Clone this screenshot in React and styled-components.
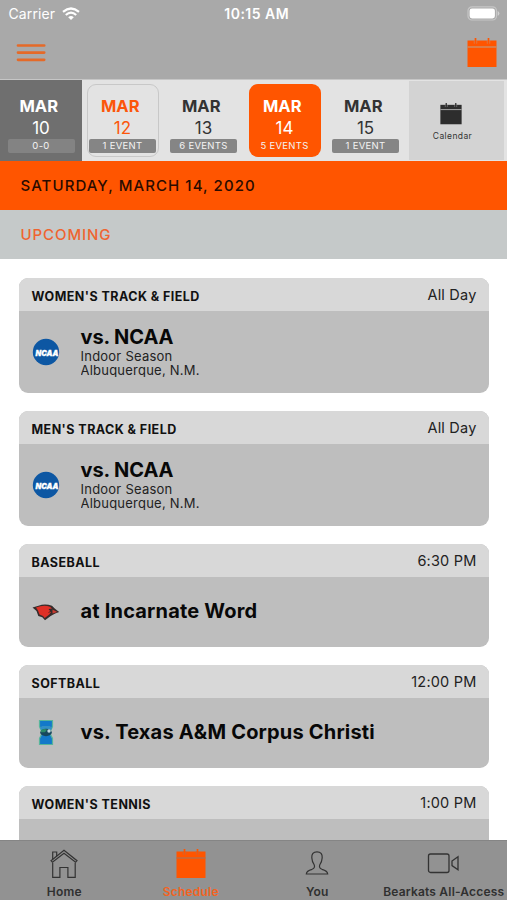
import React from "react";
import styled, { createGlobalStyle } from "styled-components";

const days = [
  { month: "MAR", day: "10", label: "0-0", type: "past" },
  { month: "MAR", day: "12", label: "1 EVENT", type: "today" },
  { month: "MAR", day: "13", label: "6 EVENTS", type: "normal" },
  { month: "MAR", day: "14", label: "5 EVENTS", type: "selected" },
  { month: "MAR", day: "15", label: "1 EVENT", type: "normal" },
];

const NcaaLogo = () => (
  <svg width="28" height="28" viewBox="0 0 28 28">
    <circle cx="14" cy="14" r="13.200" fill="#0d57a3" />
    <text
      x="3.500"
      y="17.500"
      textLength="23"
      lengthAdjust="spacingAndGlyphs"
      fill="#fff"
      stroke="#fff"
      strokeWidth="0.300"
      fontFamily="Inter, sans-serif"
      fontSize="8"
      fontWeight="900"
      fontStyle="italic"
    >
      NCAA
    </text>
  </svg>
);

const CardinalLogo = () => (
  <svg width="28" height="28" viewBox="0 0 28 28">
    <path
      d="M.5 9.500l6-1.800Q13 5.200 20 7.800l3 3 4.200 3.200-4 1.400-4.500 2.600-5.700 4.300-2.700-3-4-1.300-1.800-5z"
      fill="#362c2b"
    />
    <path
      d="M4 9.600q7.500-3 14-.8l2 1.700-3.500.5 2.500 3-1.700 2.600-4.600 3.400-1.700-2-3.500-1.500-1.500-4z"
      fill="#df3026"
    />
    <path d="M20.500 11.500l4.800 2.400-4.800 1.600z" fill="#c93a30" />
    <path d="M17.500 11.200l1.500 2-2.500 1.300" fill="none" stroke="#322625" strokeWidth=".8" />
  </svg>
);

const IslandersLogo = () => (
  <svg width="28" height="28" viewBox="0 0 28 28">
    <path
      d="M7.500 1.500h13v6l-2 4.500v3.500l2 4v6h-13v-6l2-4V12l-2-4.500z"
      fill="#1379c9"
      stroke="#58b59b"
      strokeWidth="1.200"
    />
    <path d="M8 9.500L10 7h8l2 2.500-2 2h-8z" fill="#3290c4" />
    <ellipse cx="14" cy="13.500" rx="5.800" ry="3.700" fill="#17485d" />
    <path d="M9 11.500q3-2.500 6-.8l-2 2.600H9z" fill="#2c8b68" />
    <circle cx="17" cy="12" r="1.700" fill="#c3dce1" />
  </svg>
);

const events = [
  {
    sport: "WOMEN'S TRACK & FIELD",
    time: "All Day",
    title: "vs. NCAA",
    lines: ["Indoor Season", "Albuquerque, N.M."],
    logo: <NcaaLogo />,
  },
  {
    sport: "MEN'S TRACK & FIELD",
    time: "All Day",
    title: "vs. NCAA",
    lines: ["Indoor Season", "Albuquerque, N.M."],
    logo: <NcaaLogo />,
  },
  { sport: "BASEBALL", time: "6:30 PM", title: "at Incarnate Word", logo: <CardinalLogo /> },
  {
    sport: "SOFTBALL",
    time: "12:00 PM",
    title: "vs. Texas A&M Corpus Christi",
    logo: <IslandersLogo />,
  },
  { sport: "WOMEN'S TENNIS", time: "1:00 PM", title: "" },
];

const CalendarIcon = ({ size, color, line }) => (
  <svg width={size} height={size} viewBox="0 0 30 30">
    <path d="M.5 2.500h29V29H.5z" fill={color} />
    <path d="M.5 9h29" stroke={line} strokeWidth="1.300" />
    <path d="M7.300 2v3.500M9.700 2v3.500M20.300 2v3.500M22.700 2v3.500" stroke={line} strokeWidth=".8" />
    <path d="M8.500 0v5M21.500 0v5" stroke={color} strokeWidth="1.700" />
  </svg>
);

const MenuIcon = () => (
  <svg width="30" height="20" viewBox="0 0 30 20">
    <path
      d="M2 2.500h26.200M2 9.600h26.200M2 16.800h26.200"
      stroke="#e56a28"
      strokeWidth="2.700"
      strokeLinecap="round"
    />
  </svg>
);

const WifiIcon = () => (
  <svg width="18" height="14" viewBox="0 0 18 14">
    <g fill="none" stroke="#fff" strokeWidth="2.200">
      <path d="M1 4.900Q9-1.900 17 4.900" />
      <path d="M3.800 8Q9 3.400 14.200 8" />
    </g>
    <path d="M6.200 10.200Q9 7.900 11.800 10.200L9 13z" fill="#fff" />
  </svg>
);

const BatteryIcon = () => (
  <svg width="33" height="15" viewBox="0 0 33 15">
    <rect x="1" y=".8" width="28.500" height="13.200" rx="4" fill="none" stroke="#c6c6c6" strokeWidth="1.200" />
    <rect x="2.600" y="2.400" width="25.300" height="10" rx="2.400" fill="#fff" />
    <path d="M30.700 5v4.800q1.700-.7 1.700-2.400T30.700 5z" fill="#d0d0d0" />
  </svg>
);

const HomeIcon = () => (
  <svg width="30" height="30" viewBox="0 0 30 30" fill="none" stroke="#333" strokeWidth="1.200">
    <path d="M3.700 13.800v14.500h7.200V18.500h8v9.800h7.300V13.800" />
    <path d="M2 11.700L15 1.300l13 10.400-1.400 1.600L15 4.200 3.400 13.300z" />
    <path d="M3.700 10.300V3h4v4.200" />
  </svg>
);

const UserIcon = () => (
  <svg width="30" height="30" viewBox="0 0 30 30" fill="none" stroke="#333" strokeWidth="1.200">
    <path d="M15 2.800c-3.700 0-5.500 2.500-5.200 6 .1 3.200 1 5 2.500 7.200.7 2.300-.3 3.700-2.300 4.300-3.700 1-5.500 2-5.700 4.700h21.400c-.2-2.700-2-3.700-5.700-4.700-2-.6-3-2-2.300-4.300 1.500-2.200 2.400-4 2.500-7.200.3-3.500-1.500-6-5.200-6z" />
  </svg>
);

const VideoIcon = () => (
  <svg width="33" height="30" viewBox="0 0 33 30" fill="none" stroke="#333" strokeWidth="1.300">
    <rect x="1.500" y="5" width="20.500" height="18.500" rx="2" />
    <path d="M25 12l6-4.200v13l-6-4.200z" />
  </svg>
);

const App = () => {
  return (
    <Screen>
      <GlobalStyle />
      <Header>
        <StatusBar>
          <Carrier>
            Carrier <WifiIcon />
          </Carrier>
          <Clock>10:15 AM</Clock>
          <Battery>
            <BatteryIcon />
          </Battery>
        </StatusBar>
        <NavBar>
          <MenuIcon />
          <CalendarIcon size={30} color="#ff5500" line="#c9916e" />
        </NavBar>
      </Header>

      <DayStrip>
        {days.map((item) => (
          <DayCell key={item.day} $type={item.type}>
            <DayBox $type={item.type}>
              <Month>{item.month}</Month>
              <DayNumber>{item.day}</DayNumber>
              <Count $type={item.type}>{item.label}</Count>
            </DayBox>
          </DayCell>
        ))}
        <CalendarButton>
          <CalendarIcon size={22} color="#2d2d2d" line="#aaa" />
          <span>Calendar</span>
        </CalendarButton>
      </DayStrip>

      <DateBar>SATURDAY, MARCH 14, 2020</DateBar>
      <SectionBar>UPCOMING</SectionBar>

      <EventList>
        {events.map((event) => (
          <Card key={event.sport}>
            <CardHeader>
              <Sport>{event.sport}</Sport>
              <Time>{event.time}</Time>
            </CardHeader>
            <CardBody $tall={Boolean(event.lines)}>
              <Logo>{event.logo}</Logo>
              <Details>
                <Title $compact={Boolean(event.lines)}>{event.title}</Title>
                {event.lines?.map((line) => (
                  <Line key={line}>{line}</Line>
                ))}
              </Details>
            </CardBody>
          </Card>
        ))}
      </EventList>

      <TabBar>
        <Tab>
          <HomeIcon />
          <span>Home</span>
        </Tab>
        <Tab $active>
          <CalendarIcon size={30} color="#ff5500" line="#b07050" />
          <span>Schedule</span>
        </Tab>
        <Tab>
          <UserIcon />
          <span>You</span>
        </Tab>
        <Tab>
          <VideoIcon />
          <span>Bearkats All-Access</span>
        </Tab>
      </TabBar>
    </Screen>
  );
};

const GlobalStyle = createGlobalStyle`
  * {
    box-sizing: border-box;
  }
  body {
    margin: 0;
    background: #fff;
    font-family: Inter, "Liberation Sans", sans-serif;
    overflow: hidden;
  }
  svg {
    display: block;
    flex-shrink: 0;
  }
`;

const Screen = styled.div`
  width: 507px;
  height: 900px;
  display: flex;
  flex-direction: column;
  overflow: hidden;
  white-space: nowrap;
`;

const Header = styled.header`
  height: 79px;
  flex-shrink: 0;
  background: #a9a9a9;
`;

const StatusBar = styled.div`
  height: 27px;
  padding: 0 6px 0 8.5px;
  display: grid;
  grid-template-columns: 1fr auto 1fr;
  align-items: center;
  color: #fff;
  font-size: 14px;
`;

const Carrier = styled.div`
  display: flex;
  align-items: center;
  gap: 6.5px;
  letter-spacing: 0.1px;
`;

const Clock = styled.div`
  font-weight: 600;
  padding-left: 4px;
  letter-spacing: 0.5px;
`;

const Battery = styled.div`
  display: flex;
  justify-content: flex-end;
  padding-right: 1px;
`;

const NavBar = styled.div`
  display: flex;
  justify-content: space-between;
  align-items: center;
  padding: 11px 10px 0 15.5px;
`;

const DayStrip = styled.div`
  height: 82px;
  flex-shrink: 0;
  display: flex;
  background: #e3e3e3;
  border-top: 1px solid #c6c6c6;
`;

const DayCell = styled.div`
  width: ${({ $type }) => ($type === "past" ? "82px" : "81px")};
  flex-shrink: 0;
  display: flex;
  justify-content: center;
  padding-top: 4px;
  background: ${({ $type }) => ($type === "past" ? "#6f6f6f" : "transparent")};
`;

const boxColors = {
  past: "#fff",
  today: "#fc560b",
  normal: "#333",
  selected: "#fff",
};

const DayBox = styled.div`
  width: 72px;
  height: 73px;
  display: flex;
  flex-direction: column;
  align-items: center;
  border-radius: 9px;
  border: 1px solid ${({ $type }) => ($type === "today" ? "#c8c8c8" : "transparent")};
  background: ${({ $type }) => ($type === "selected" ? "#ff5500" : "transparent")};
  color: ${({ $type }) => boxColors[$type]};
  padding-top: 11px;
`;

const Month = styled.div`
  font-size: 16.5px;
  line-height: 21px;
  font-weight: 700;
  padding-right: 4.5px;
`;

const DayNumber = styled.div`
  font-size: 17px;
  line-height: 22px;
  height: 22px;
`;

const Count = styled.div`
  width: 67px;
  height: 14px;
  flex-shrink: 0;
  line-height: 14px;
  border-radius: 2px;
  text-align: center;
  font-size: 9.5px;
  letter-spacing: 0.3px;
  color: #f4f4f4;
  background: ${({ $type }) =>
    $type === "selected" ? "transparent" : $type === "past" ? "#838383" : "#858585"};
`;

const CalendarButton = styled.div`
  width: 95px;
  margin: 1px 0 1px 3px;
  padding-top: 22px;
  padding-right: 9px;
  display: flex;
  flex-direction: column;
  align-items: center;
  background: #d3d3d3;
  color: #333;
  svg {
    margin-right: 2px;
  }
  span {
    font-size: 8.5px;
    line-height: 12px;
    margin-top: 4.5px;
    margin-left: 1px;
    letter-spacing: 0.4px;
  }
`;

const Bar = styled.div`
  height: 49px;
  flex-shrink: 0;
  display: flex;
  align-items: center;
  padding-left: 20.5px;
  font-size: 15px;
  font-weight: 500;
`;

const DateBar = styled(Bar)`
  background: #ff5500;
  color: #2a0b00;
  letter-spacing: 1.07px;
`;

const SectionBar = styled(Bar)`
  background: #c5c9c9;
  color: #ef6430;
  letter-spacing: 0.93px;
`;

const EventList = styled.main`
  flex: 1;
  min-height: 0;
  overflow: hidden;
  padding: 19px 18.5px 0 19px;
`;

const Card = styled.section`
  border-radius: 9px;
  overflow: hidden;
  background: #bebebe;
  margin-bottom: 18.5px;
`;

const CardHeader = styled.div`
  height: 33px;
  display: flex;
  justify-content: space-between;
  align-items: center;
  padding: 0 12px 0 12.5px;
  background: #d8d8d8;
`;

const Sport = styled.div`
  font-size: 12.5px;
  font-weight: 700;
  padding-top: 4px;
  color: #111;
  letter-spacing: 0.45px;
`;

const Time = styled.div`
  font-size: 14.5px;
  color: #222;
  padding-bottom: 1px;
  letter-spacing: 0.2px;
`;

const CardBody = styled.div`
  height: ${({ $tall }) => ($tall ? "81.5px" : "69.5px")};
  display: flex;
  align-items: center;
  padding-left: 13px;
`;

const Logo = styled.div`
  width: 28px;
  margin-right: 20.5px;
`;

const Details = styled.div`
  color: #222;
  padding-bottom: 1px;
`;

const Title = styled.div`
  font-size: 20px;
  line-height: 25px;
  font-weight: 700;
  letter-spacing: ${({ $compact }) => ($compact ? "-0.1px" : "0.18px")};
  color: #080808;
`;

// the last line is cut just under its baseline, like a fixed-height label
const Line = styled.div`
  font-size: 13px;
  height: 13.5px;
  line-height: 13.5px;
  letter-spacing: 0.23px;
  &:last-child {
    overflow: hidden;
  }
`;

const TabBar = styled.nav`
  height: 60px;
  flex-shrink: 0;
  display: grid;
  grid-template-columns: repeat(4, 126.5px);
  padding-left: 1px;
  background: #929292;
  border-top: 1px solid #858585;
`;

const Tab = styled.div`
  display: flex;
  flex-direction: column;
  align-items: center;
  padding-top: 8px;
  color: ${({ $active }) => ($active ? "#f4631f" : "#303030")};
  span {
    margin-top: 4.5px;
    font-size: 12px;
    line-height: 15px;
    font-weight: 600;
    letter-spacing: 0.2px;
  }
`;

export default App;
